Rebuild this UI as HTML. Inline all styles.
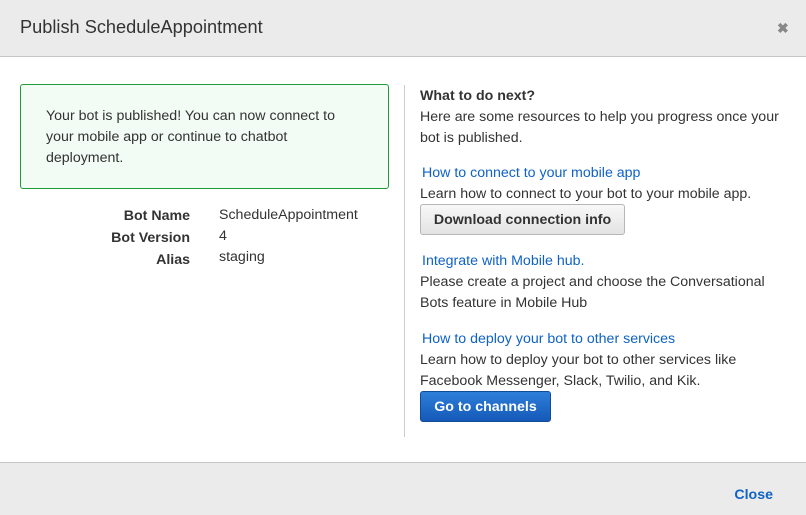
<!DOCTYPE html>
<html><head><meta charset="utf-8"><style>
*{margin:0;padding:0;box-sizing:border-box}
body{width:806px;height:515px;background:#fff;font-family:"Liberation Sans",Arial,sans-serif;color:#333;font-size:14.2px;position:relative;overflow:hidden}
.hdr{position:absolute;left:0;top:0;width:806px;height:57px;background:#ebebeb;border-bottom:1px solid #c6c6c6}
.hdr h1{position:absolute;left:20px;top:17px;font-size:18.2px;font-weight:normal;color:#333}
.x{position:absolute;left:777px;top:20px;font-size:14px;color:#888;font-weight:bold}
.ok{position:absolute;left:20px;top:84px;width:369px;height:105px;border:1px solid #1e9c37;border-radius:3px;background:#f2fbf4;padding:21px 25px 0;line-height:21px}
.a{position:absolute;margin-top:1px}
.l{text-align:right;font-weight:bold;width:190px;left:0}
.v{left:219px}
.div{position:absolute;left:404px;top:85px;width:1px;height:352px;background:#ccc}
.r{position:absolute;left:420px;line-height:21px;white-space:nowrap;margin-top:1px}
.lnk{color:#0f62c6}
.btn{position:absolute;left:420px;height:31px;border-radius:3px;font-weight:bold;line-height:31px;text-align:center}
.ftr{position:absolute;left:0;top:462px;width:806px;height:53px;background:#ebebeb;border-top:1px solid #c6c6c6}
</style></head><body>
<div class="hdr"><h1>Publish ScheduleAppointment</h1><div class="x">✖</div></div>
<div class="ok">Your bot is published! You can now connect to<br>your mobile app or continue to chatbot<br>deployment.</div>
<div class="a l" style="top:207px">Bot Name</div><div class="a v" style="top:206px">ScheduleAppointment</div>
<div class="a l" style="top:229px">Bot Version</div><div class="a v" style="top:227px">4</div>
<div class="a l" style="top:251px">Alias</div><div class="a v" style="top:248px">staging</div>
<div class="div"></div>
<div class="r" style="top:85px"><b>What to do next?</b><br>Here are some resources to help you progress once your<br>bot is published.</div>
<div class="r lnk" style="top:162px;left:422px">How to connect to your mobile app</div>
<div class="r" style="top:183px">Learn how to connect to your bot to your mobile app.</div>
<div class="btn" style="top:204px;width:205px;background:linear-gradient(#f8f8f8,#e3e3e3);border:1px solid #b6b6b6;color:#333">Download connection info</div>
<div class="r lnk" style="top:250px;left:422px">Integrate with Mobile hub.</div>
<div class="r" style="top:271px">Please create a project and choose the Conversational<br>Bots feature in Mobile Hub</div>
<div class="r lnk" style="top:328px;left:422px">How to deploy your bot to other services</div>
<div class="r" style="top:349px">Learn how to deploy your bot to other services like<br>Facebook Messenger, Slack, Twilio, and Kik.</div>
<div class="btn" style="top:391px;width:131px;background:linear-gradient(#2d7fd9,#1559b8);border:1px solid #124a94;color:#fff">Go to channels</div>
<div class="ftr"><div style="position:absolute;right:33px;top:24px;color:#0f62c6;font-weight:bold">Close</div></div>
</body></html>
